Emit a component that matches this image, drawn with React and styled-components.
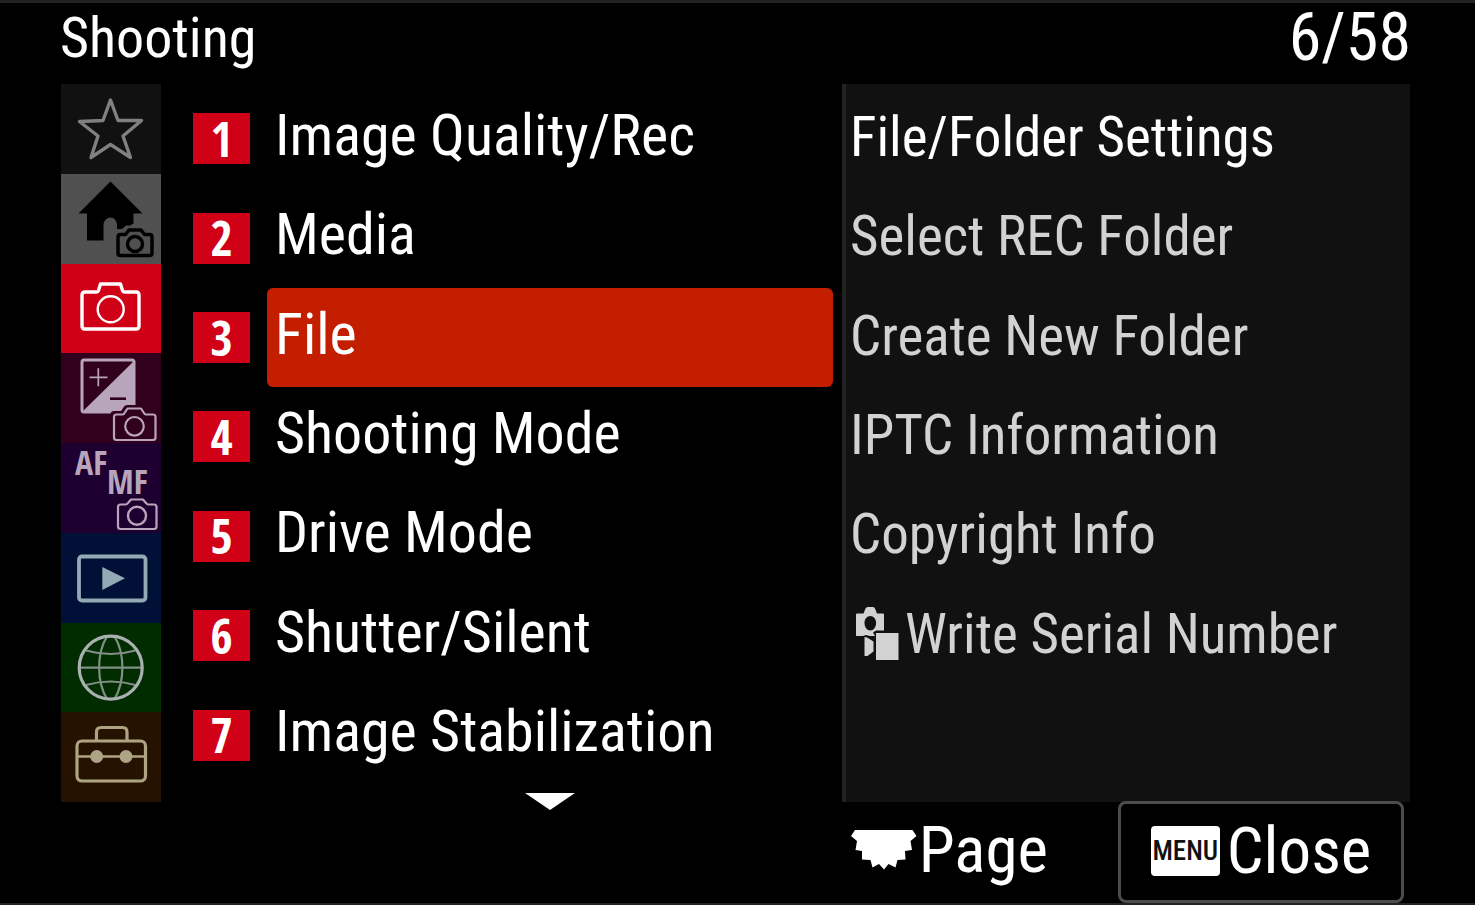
import React from "react";
import styled, { createGlobalStyle } from "styled-components";

const GlobalStyle = createGlobalStyle`
  * { box-sizing: border-box; }
  body {
    margin: 0;
    background: #000;
    color: #fff;
    font-family: "Roboto Condensed", Roboto, "Liberation Sans", sans-serif;
  }
  button {
    margin: 0;
    padding: 0;
    border: 0;
    background: none;
    color: inherit;
    font: inherit;
    text-align: left;
    cursor: pointer;
  }
  svg { display: block; flex: none; overflow: visible; }
`;

const Screen = styled.div`
  min-height: 100vh;
  display: grid;
  grid-template-rows: 81px 1fr 101px;
  border-top: 3px solid #222;
  border-bottom: 2px solid #222;
`;

const Header = styled.header`
  display: flex;
  align-items: center;
  justify-content: space-between;
  padding: 0 64px 12px 60px;
`;

const Title = styled.h1`
  margin: 0;
  font-size: 56px;
  line-height: 64px;
  font-weight: 400;
`;

const Counter = styled.span`
  font-size: 66px;
  line-height: 64px;
`;

const Main = styled.main`
  display: grid;
  grid-template-columns: 100px minmax(0, 681fr) minmax(0, 568fr);
  padding: 0 65px 0 61px;
`;

const Tabs = styled.nav`
  display: grid;
  grid-auto-rows: minmax(0, 1fr);
`;

const Tab = styled.button`
  display: flex;
  align-items: center;
  background: ${(p) => p.$bg};
  color: ${(p) => p.$ink};
`;

const List = styled.div`
  display: grid;
  grid-template-rows: repeat(7, minmax(0, 1fr)) 17px;
  padding: 5px 9px 0 32px;
`;

const Row = styled.button`
  display: grid;
  grid-template-columns: 57px 1fr;
  column-gap: 17px;
  align-items: center;
`;

const Badge = styled.span`
  display: flex;
  align-items: center;
  justify-content: center;
  height: 51px;
  background: #d00016;
  font-family: "Open Sans Condensed", "Roboto Condensed", sans-serif;
  font-size: 48px;
  line-height: 48px;
  font-weight: 700;
`;

const Label = styled.span`
  display: flex;
  align-items: center;
  align-self: stretch;
  padding: 0 0 8px 8px;
  border-radius: 6px;
  background: ${(p) => (p.$active ? "#c41e00" : "transparent")};
  font-size: 58px;
  line-height: 72px;
  white-space: nowrap;
`;

const More = styled.div`
  display: flex;
  justify-content: center;
  padding: 8px 0 0 74px;
`;

const Panel = styled.section`
  display: grid;
  grid-template-rows: repeat(7, minmax(0, 1fr)) 17px;
  padding: 5px 0 0 4px;
  border-left: 4px solid #222;
  background: #111;
`;

const Item = styled.button`
  display: flex;
  align-items: center;
  gap: 6px;
  padding: 0 0 4px ${(p) => (p.$icon ? "6px" : "0")};
  color: ${(p) => (p.$active ? "#fff" : "#d2d2d2")};
  font-size: 55px;
  line-height: 72px;
  white-space: nowrap;
`;

const Footer = styled.footer`
  display: flex;
  align-items: stretch;
  justify-content: flex-end;
  gap: 70px;
  margin-top: -1px;
  padding: 0 71px 0 0;
  font-size: 65px;
  line-height: 72px;
`;

const Hint = styled.div`
  display: flex;
  align-items: center;
  gap: 2px;
  padding-bottom: 4px;
`;

const CloseButton = styled.button`
  display: flex;
  align-items: center;
  justify-content: center;
  gap: 7px;
  width: 286px;
  padding-bottom: 2px;
  border: 3px solid #4c4c4c;
  border-radius: 8px;
`;

const MenuKey = styled.span`
  display: flex;
  align-items: center;
  justify-content: center;
  width: 69px;
  height: 50px;
  border-radius: 4px;
  background: #fff;
  color: #111;
  font-size: 27px;
  line-height: 32px;
  font-weight: 500;
`;

function TabArt({ children }) {
  return (
    <svg width="100" height="88" viewBox="0 0 100 88" fill="none" stroke="currentColor" aria-hidden="true">
      {children}
    </svg>
  );
}

const StarArt = () => (
  <TabArt>
    <path strokeWidth="3.4" strokeLinejoin="round" d="M49.5 15 57 35.500H80.5L62 51 69.5 72.5 49.5 59.5 30 72.5 37 51 18.5 36.5 42 35.5Z" />
  </TabArt>
);

const HomeArt = () => (
  <TabArt>
    <path fill="currentColor" stroke="none" d="M49.5 6.5 81.5 38.5H72.5V48.500L69 50.500 65 50.500 61 54H56V50C56 46 53 42.500 49.500 42.500S42.500 46 42.500 50V65.500H26V38.500H17.500Z" />
    <path strokeWidth="3.5" strokeLinejoin="round" d="M59.500 59.500H64.500L68 55H80L83.500 59.500H88.500Q91 59.500 91 62V78Q91 80.500 88.500 80.500H59.500Q57 80.500 57 78V62Q57 59.500 59.500 59.500Z" />
    <circle cx="74" cy="69" r="7.500" strokeWidth="3.500" />
  </TabArt>
);

const CameraArt = () => (
  <TabArt>
    <path strokeWidth="3.4" strokeLinejoin="round" d="M24 28H35.500Q37 28 37.500 26.500L39.500 20H59.500L61.500 26.500Q62 28 63.500 28H75Q78 28 78 31V62Q78 65 75 65H24Q21 65 21 62V31Q21 28 24 28Z" />
    <circle cx="49.7" cy="45.3" r="13" strokeWidth="2.4" />
  </TabArt>
);

const ExposureArt = () => (
  <TabArt>
    <rect x="21" y="6" width="52" height="52" rx="2" strokeWidth="3" />
    <path d="M73 7V58H21Z" fill="currentColor" stroke="none" />
    <path d="M28.500 23.300H46.500M37.300 14.300V32.300" strokeWidth="1.700" />
    <path d="M49 44.700H65" stroke="#30001c" strokeWidth="2.600" />
    <path fill="#30001c" stroke="#30001c" strokeWidth="7" strokeLinejoin="round" d="M55.500 60.500H62L66 54.500H80L84 60.500H92.500V84H53V60.500Z" />
    <path strokeWidth="2.200" strokeLinejoin="round" d="M55.500 60.500H61.500Q63 60.500 63.500 59L66.500 54.500H80L83 59Q83.500 60.500 85 60.500H92Q94.500 60.500 94.500 63V83.500Q94.500 86 92 86H55.500Q53 86 53 83.500V63Q53 60.500 55.500 60.500Z" />
    <circle cx="73.500" cy="72.300" r="9.300" strokeWidth="2.200" />
  </TabArt>
);

const FocusText = styled.text`
  font-family: "Open Sans Condensed", "Roboto Condensed", sans-serif;
  font-size: 34px;
  font-weight: 700;
  fill: currentColor;
  stroke: none;
`;

const FocusArt = () => (
  <TabArt>
    <FocusText x="14" y="31">AF</FocusText>
    <FocusText x="46" y="50">MF</FocusText>
    <path strokeWidth="2.200" strokeLinejoin="round" d="M59.500 60.500H64.500Q66 60.500 67 59L70 55.500H82L85 59Q86 60.500 87.500 60.500H93Q95.500 60.500 95.500 63V82.500Q95.500 85 93 85H59.500Q57 85 57 82.500V63Q57 60.500 59.500 60.500Z" />
    <circle cx="76" cy="71.700" r="9" strokeWidth="2.400" />
  </TabArt>
);

const PlaybackArt = () => (
  <TabArt>
    <rect x="18" y="22.500" width="66.500" height="44" rx="3" strokeWidth="3.800" />
    <path d="M41.300 33 64 44.200 41.300 56Z" fill="currentColor" stroke="none" />
  </TabArt>
);

const GlobeArt = () => (
  <TabArt>
    <circle cx="49.700" cy="44.700" r="31.500" strokeWidth="3.200" />
    <g strokeWidth="2.200" opacity="0.75">
      <path d="M18 44.700H81M25 27.500Q49.700 34.500 74.500 27.500M25 62Q49.700 55 74.500 62" />
      <path d="M46 13.500C35.500 30 35.500 59 46 76M53.500 13.500C64 30 64 59 53.500 76" />
    </g>
  </TabArt>
);

const ToolboxArt = () => (
  <TabArt>
    <rect x="16" y="28" width="68.500" height="40" rx="5" strokeWidth="3.200" />
    <path d="M35.500 27.500V19Q35.500 14.500 40 14.500H61.500Q66 14.500 66 19V27.500" strokeWidth="3.200" />
    <path d="M16 43.500H84" strokeWidth="2.400" />
    <circle cx="35.700" cy="43.500" r="6.500" fill="currentColor" stroke="none" />
    <circle cx="65" cy="43.500" r="6.500" fill="currentColor" stroke="none" />
  </TabArt>
);

const StillMovieIcon = () => (
  <svg width="43" height="53" viewBox="0 0 43 53" fill="currentColor" aria-hidden="true">
    <path fillRule="evenodd" d="M1 6.500H7.500L9.500 1.500Q10 0 12 0H17Q18.500 0 19 1.500L21 6.500H27Q28 6.500 28 7.500V23.500H20L17 25.500 19 29H14L10 28 7 29H0V7.500Q0 6.500 1 6.500ZM14.300 9C11 9 8.500 12 8.500 16S11 23.500 14.300 23.500 20.100 20 20.100 16 17.600 9 14.300 9Z" />
    <path d="M8.500 30 11 30.500 17.500 34.500V44.500L11.500 49H8.500Z" />
    <rect x="20" y="26" width="22.500" height="27" />
  </svg>
);

const DialIcon = () => (
  <svg width="66" height="40" viewBox="0 0 66 40" fill="#fff" aria-hidden="true">
    <path d="M4 0H61.500L65.500 6 59.500 11 61 20 54 21 54.500 29.500 46.500 30 44.500 37.500 37.500 34 33 39.500 28 34 21.500 37.500 19.500 30 11 29.500V21L4.500 20 6 11 0 6Z" />
  </svg>
);

const DownIcon = () => (
  <svg width="50" height="17" viewBox="0 0 50 17" fill="#fff" aria-hidden="true">
    <path d="M0 0H50L25 17Z" />
  </svg>
);

const tabs = [
  { name: "My Menu", bg: "#111", ink: "#808080", Art: StarArt },
  { name: "Main", bg: "#505050", ink: "#000", Art: HomeArt },
  { name: "Shooting", bg: "#d00016", ink: "#fff", Art: CameraArt },
  { name: "Exposure/Color", bg: "#30001c", ink: "#b9a5bb", Art: ExposureArt },
  { name: "Focus", bg: "#1e0030", ink: "#b9a5bb", Art: FocusArt },
  { name: "Playback", bg: "#001036", ink: "#93aab5", Art: PlaybackArt },
  { name: "Network", bg: "#002c00", ink: "#aab0b0", Art: GlobeArt },
  { name: "Setup", bg: "#261200", ink: "#ada483", Art: ToolboxArt },
];

const groups = [
  "Image Quality/Rec",
  "Media",
  "File",
  "Shooting Mode",
  "Drive Mode",
  "Shutter/Silent",
  "Image Stabilization",
];

const items = [
  { text: "File/Folder Settings", active: true },
  { text: "Select REC Folder" },
  { text: "Create New Folder" },
  { text: "IPTC Information" },
  { text: "Copyright Info" },
  { text: "Write Serial Number", icon: true },
];

export default function App() {
  return (
    <>
      <GlobalStyle />
      <Screen>
        <Header>
          <Title>Shooting</Title>
          <Counter>6/58</Counter>
        </Header>
        <Main>
          <Tabs aria-label="Menu tabs">
            {tabs.map(({ name, bg, ink, Art }) => (
              <Tab key={name} type="button" aria-label={name} $bg={bg} $ink={ink}>
                <Art />
              </Tab>
            ))}
          </Tabs>
          <List>
            {groups.map((text, i) => (
              <Row key={text} type="button">
                <Badge>{i + 1}</Badge>
                <Label $active={text === "File"}>{text}</Label>
              </Row>
            ))}
            <More>
              <DownIcon />
            </More>
          </List>
          <Panel>
            {items.map(({ text, active, icon }) => (
              <Item key={text} type="button" $active={active} $icon={icon}>
                {icon && <StillMovieIcon />}
                {text}
              </Item>
            ))}
          </Panel>
        </Main>
        <Footer>
          <Hint>
            <DialIcon />
            Page
          </Hint>
          <CloseButton type="button">
            <MenuKey>MENU</MenuKey>
            Close
          </CloseButton>
        </Footer>
      </Screen>
    </>
  );
}
